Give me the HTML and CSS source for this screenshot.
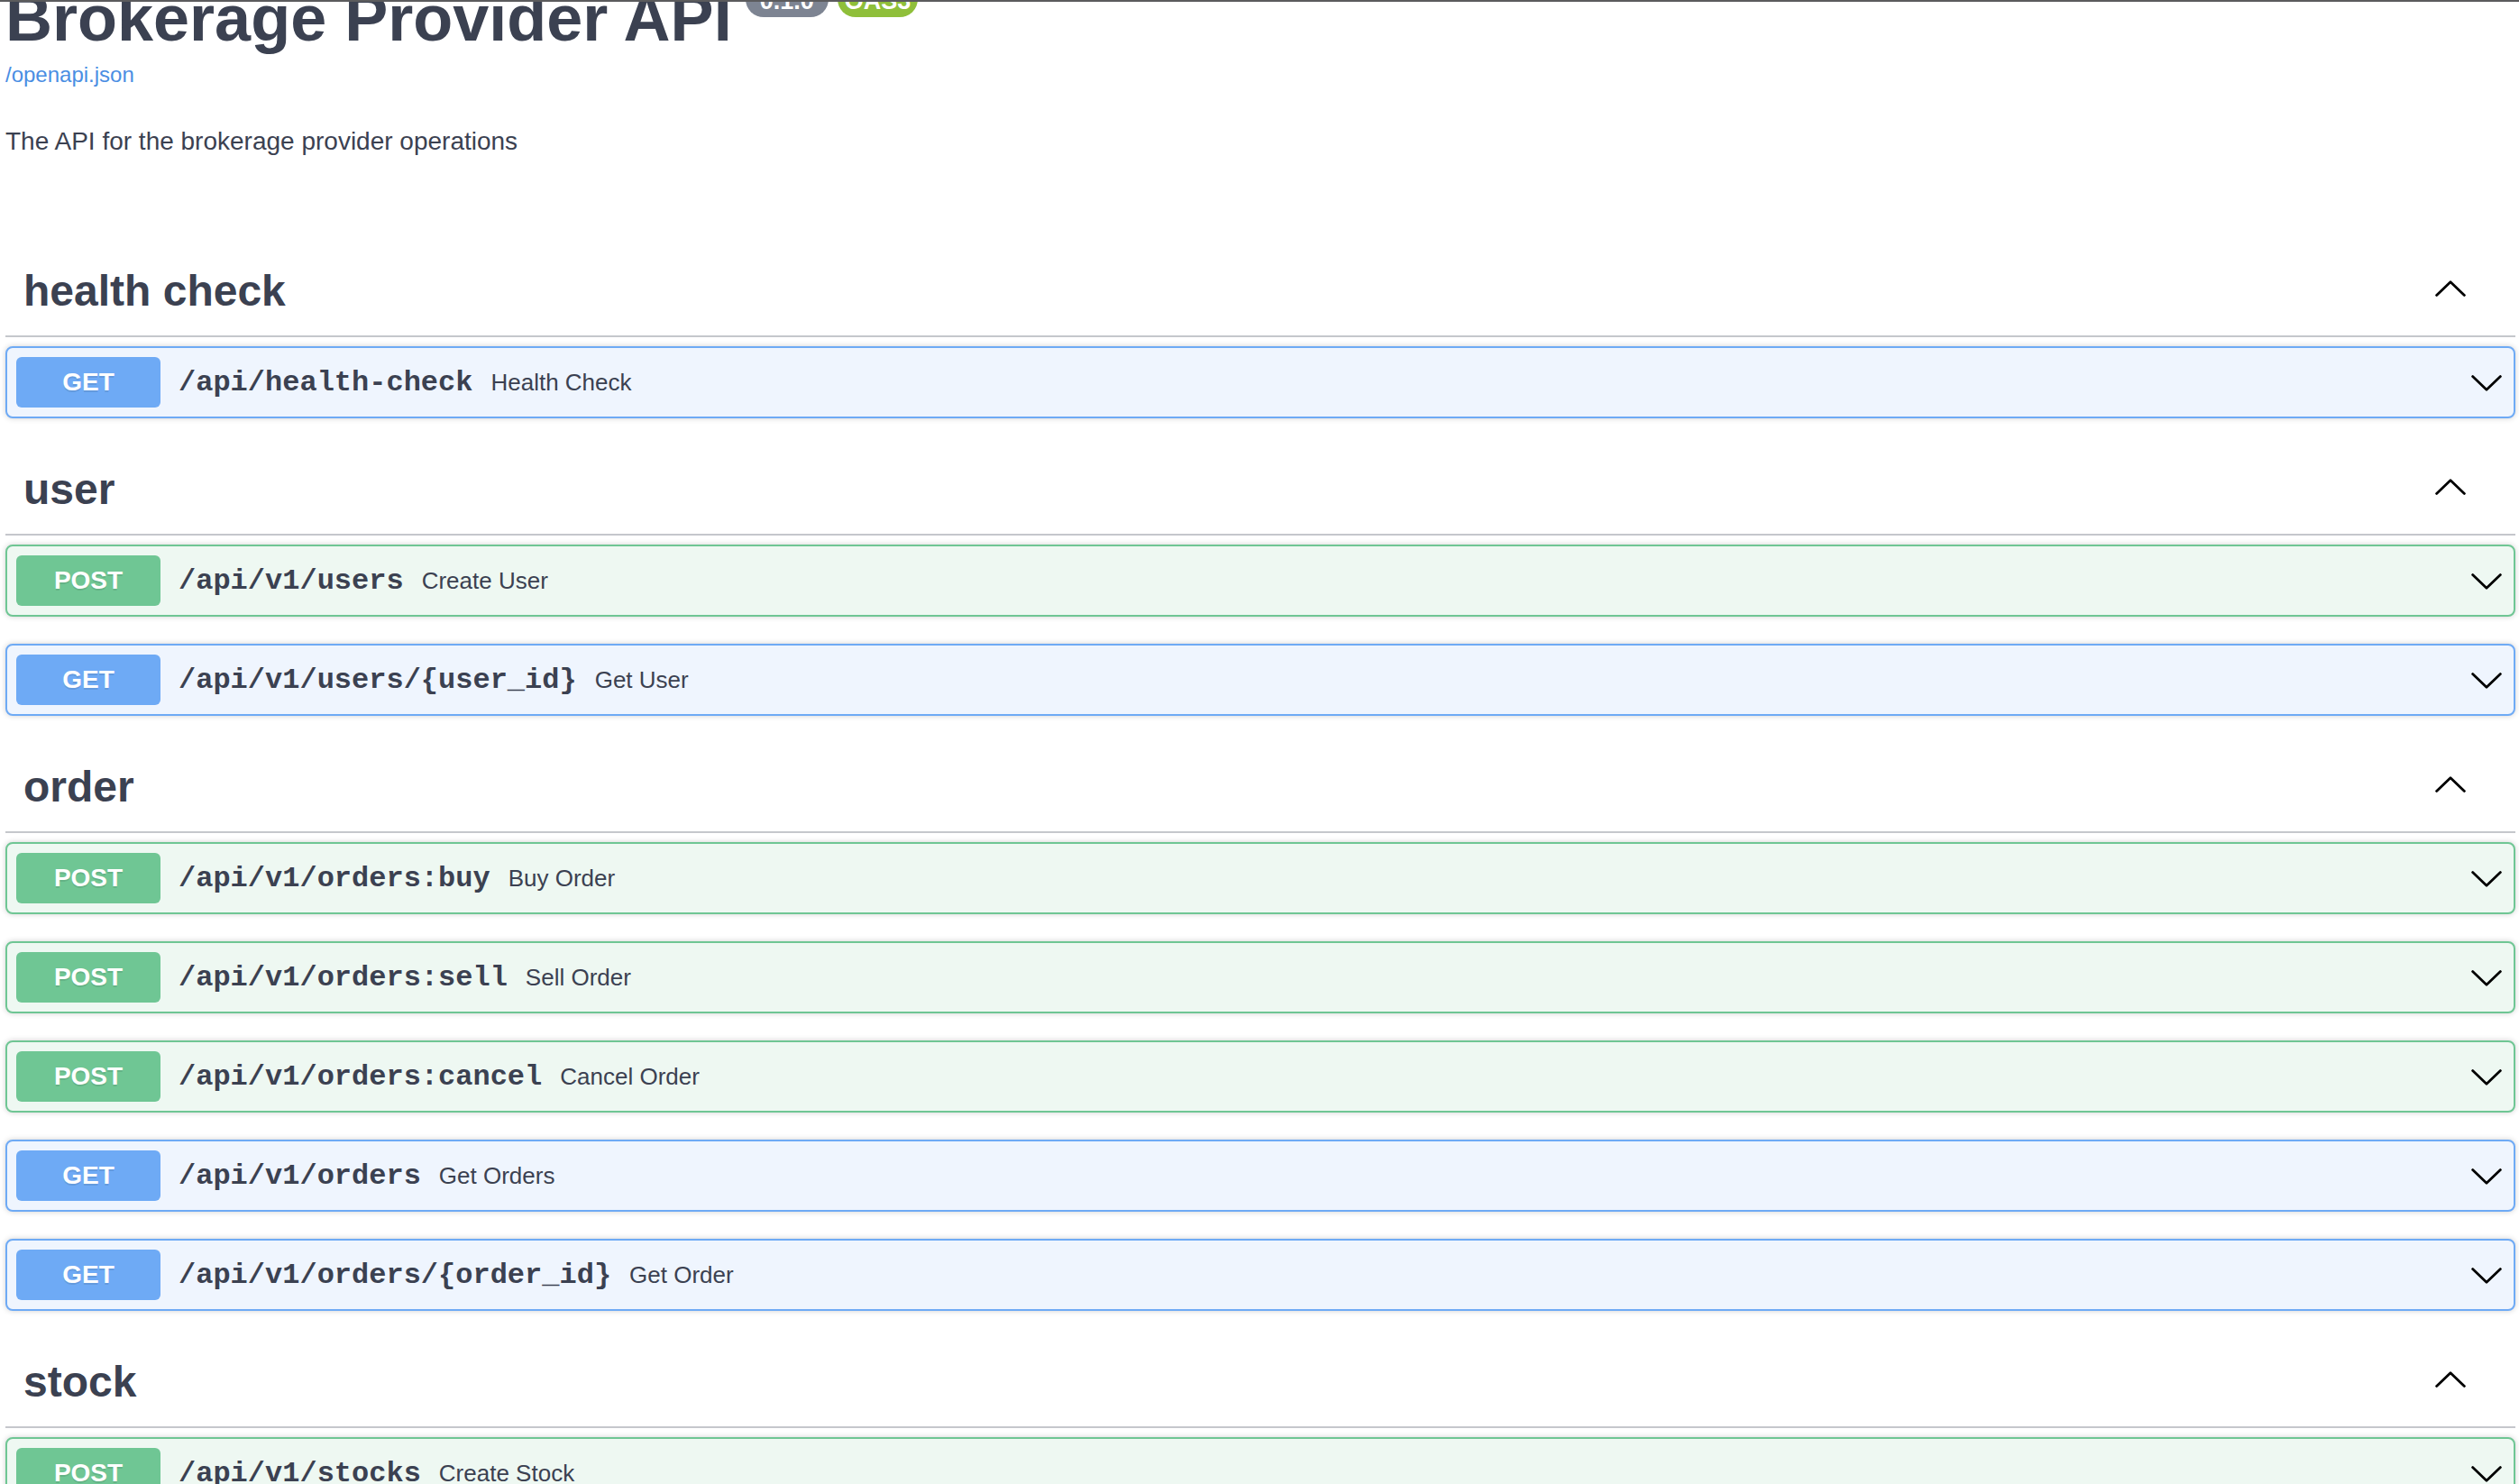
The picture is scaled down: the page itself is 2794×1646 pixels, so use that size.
FILE: index.html
```html
<!DOCTYPE html>
<html lang="en">
<head>
<meta charset="utf-8">
<title>Brokerage Provider API</title>
<link rel="stylesheet" href="styles.css">
</head>
<body>
<div class="topbar"></div>
<div class="wrapper">
  <section class="info">
    <div class="title-row">
      <h2 class="title">Brokerage Provider API</h2>
      <span class="pill pill-version">0.1.0</span>
      <span class="pill pill-oas">OAS3</span>
    </div>
    <a class="spec-link" href="#">/openapi.json</a>
    <p class="description">The API for the brokerage provider operations</p>
  </section>

  <section class="tag-section">
    <h3 class="tag"><span class="tag-name">health check</span>
      <svg class="chev-up" viewBox="0 0 34 18" width="34" height="18"><polyline points="1.6,16.4 17,1.8 32.4,16.4"/></svg>
    </h3>
    <div class="opblock get">
      <div class="summary"><span class="method">GET</span><span class="path">/api/health-check</span><span class="desc">Health Check</span>
        <svg class="chev-down" viewBox="0 0 34 18" width="34" height="18"><polyline points="1.6,1.6 17,16.2 32.4,1.6"/></svg></div>
    </div>
  </section>

  <section class="tag-section">
    <h3 class="tag"><span class="tag-name">user</span>
      <svg class="chev-up" viewBox="0 0 34 18" width="34" height="18"><polyline points="1.6,16.4 17,1.8 32.4,16.4"/></svg>
    </h3>
    <div class="opblock post">
      <div class="summary"><span class="method">POST</span><span class="path">/api/v1/users</span><span class="desc">Create User</span>
        <svg class="chev-down" viewBox="0 0 34 18" width="34" height="18"><polyline points="1.6,1.6 17,16.2 32.4,1.6"/></svg></div>
    </div>
    <div class="opblock get">
      <div class="summary"><span class="method">GET</span><span class="path">/api/v1/users/{user_id}</span><span class="desc">Get User</span>
        <svg class="chev-down" viewBox="0 0 34 18" width="34" height="18"><polyline points="1.6,1.6 17,16.2 32.4,1.6"/></svg></div>
    </div>
  </section>

  <section class="tag-section">
    <h3 class="tag"><span class="tag-name">order</span>
      <svg class="chev-up" viewBox="0 0 34 18" width="34" height="18"><polyline points="1.6,16.4 17,1.8 32.4,16.4"/></svg>
    </h3>
    <div class="opblock post">
      <div class="summary"><span class="method">POST</span><span class="path">/api/v1/orders:buy</span><span class="desc">Buy Order</span>
        <svg class="chev-down" viewBox="0 0 34 18" width="34" height="18"><polyline points="1.6,1.6 17,16.2 32.4,1.6"/></svg></div>
    </div>
    <div class="opblock post">
      <div class="summary"><span class="method">POST</span><span class="path">/api/v1/orders:sell</span><span class="desc">Sell Order</span>
        <svg class="chev-down" viewBox="0 0 34 18" width="34" height="18"><polyline points="1.6,1.6 17,16.2 32.4,1.6"/></svg></div>
    </div>
    <div class="opblock post">
      <div class="summary"><span class="method">POST</span><span class="path">/api/v1/orders:cancel</span><span class="desc">Cancel Order</span>
        <svg class="chev-down" viewBox="0 0 34 18" width="34" height="18"><polyline points="1.6,1.6 17,16.2 32.4,1.6"/></svg></div>
    </div>
    <div class="opblock get">
      <div class="summary"><span class="method">GET</span><span class="path">/api/v1/orders</span><span class="desc">Get Orders</span>
        <svg class="chev-down" viewBox="0 0 34 18" width="34" height="18"><polyline points="1.6,1.6 17,16.2 32.4,1.6"/></svg></div>
    </div>
    <div class="opblock get">
      <div class="summary"><span class="method">GET</span><span class="path">/api/v1/orders/{order_id}</span><span class="desc">Get Order</span>
        <svg class="chev-down" viewBox="0 0 34 18" width="34" height="18"><polyline points="1.6,1.6 17,16.2 32.4,1.6"/></svg></div>
    </div>
  </section>

  <section class="tag-section">
    <h3 class="tag"><span class="tag-name">stock</span>
      <svg class="chev-up" viewBox="0 0 34 18" width="34" height="18"><polyline points="1.6,16.4 17,1.8 32.4,16.4"/></svg>
    </h3>
    <div class="opblock post">
      <div class="summary"><span class="method">POST</span><span class="path">/api/v1/stocks</span><span class="desc">Create Stock</span>
        <svg class="chev-down" viewBox="0 0 34 18" width="34" height="18"><polyline points="1.6,1.6 17,16.2 32.4,1.6"/></svg></div>
    </div>
  </section>
</div>
</body>
</html>
```
FILE: styles.css
```css
html, body {
  margin: 0;
  padding: 0;
  background: #ffffff;
  height: 1646px;
  overflow: hidden;
}
body {
  font-family: "Liberation Sans", Arial, sans-serif;
  color: #3b4151;
}
.topbar {
  height: 2px;
  background: #5b5b5d;
  position: relative;
  z-index: 2;
}
.wrapper {
  padding: 0 4px 0 6px;
  margin-top: -2px;
}
.info {
  margin: 0 0 101px;
}
.title-row {
  display: flex;
  align-items: flex-start;
  margin-top: -23px;
}
.title {
  margin: 0;
  font-size: 72px;
  line-height: 83px;
  font-weight: 700;
  color: #3b4151;
}
.pill {
  display: inline-block;
  height: 40px;
  box-sizing: border-box;
  padding: 6px 8px 2px;
  border-radius: 114px;
  font-size: 27px;
  line-height: 32px;
  font-weight: 700;
  color: #ffffff;
  margin-left: 10px;
}
.pill-version {
  background: #7d8492;
  padding-left: 16px;
  padding-right: 16px;
  margin-left: 15px;
}
.pill-oas {
  background: #8fbf3a;
}
.spec-link {
  display: block;
  margin-top: 7px;
  font-size: 24px;
  line-height: 28px;
  color: #4a8ee3;
  text-decoration: none;
}
.description {
  margin: 44px 0 0;
  font-size: 28px;
  line-height: 32px;
  color: #3b4151;
}
.tag-section {
  margin: 0;
}
.tag {
  display: flex;
  align-items: center;
  margin: 0 0 10px;
  padding: 20px 40px 20px 20px;
  border-bottom: 2px solid #c5c7cc;
  font-size: 48px;
  line-height: 58px;
  font-weight: 700;
  color: #3b4151;
}
.tag-name {
  flex: 1;
}
.chev-up, .chev-down {
  fill: none;
  stroke: #000000;
  stroke-width: 2.8;
  stroke-linecap: round;
  stroke-linejoin: round;
  flex: none;
}
.chev-up {
  margin-right: 15px;
  margin-top: -6px;
}
.chev-down {
  margin-right: 3px;
  margin-top: 2px;
}
.opblock {
  margin: 0 0 30px;
  border: 2px solid;
  border-radius: 8px;
  box-shadow: 0 0 6px rgba(0, 0, 0, 0.19);
}
.opblock.get {
  background: #eff5fe;
  border-color: #6eaaf5;
}
.opblock.post {
  background: #eef8f2;
  border-color: #6fc694;
}
.summary {
  display: flex;
  align-items: center;
  padding: 10px;
}
.method {
  min-width: 160px;
  padding: 12px 0;
  border-radius: 6px;
  text-align: center;
  font-size: 28px;
  line-height: 32px;
  font-weight: 700;
  color: #ffffff;
  text-shadow: 0 2px 0 rgba(0, 0, 0, 0.1);
}
.get .method {
  background: #6eaaf5;
}
.post .method {
  background: #6fc694;
}
.path {
  padding: 0 20px;
  font-family: "Liberation Mono", "Courier New", monospace;
  font-size: 32px;
  font-weight: 700;
  color: #3b4151;
}
.desc {
  flex: 1;
  font-size: 26px;
  color: #3b4151;
}
```
